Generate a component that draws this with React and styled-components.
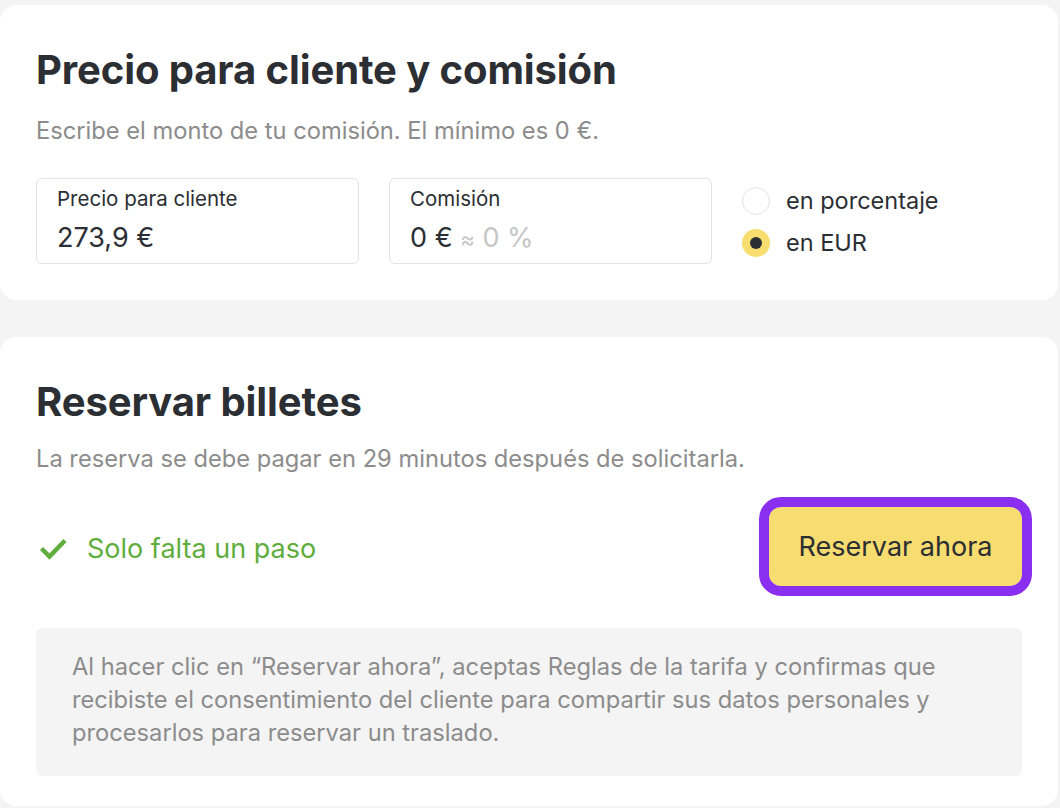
import React, { useState } from "react";
import styled, { createGlobalStyle } from "styled-components";

const GlobalStyle = createGlobalStyle`
  * { box-sizing: border-box; }
  html, body { margin: 0; padding: 0; background: #f4f4f4; }
  body {
    font-family: Inter, "Noto Sans", "Liberation Sans", sans-serif;
    color: #2b2e33;
  }
`;

const Page = styled.div`
  display: flex;
  flex-direction: column;
  gap: 37px;
  padding: 5px 2px 0 0;
  width: 1060px;
`;

const Card = styled.section`
  background: #fff;
  border-radius: 16px;
  padding: 41px 36px ${(p) => p.$bottom || 36}px;
`;

const Title = styled.h2`
  margin: 0;
  font-size: 40px;
  line-height: 48px;
  font-weight: 700;
  letter-spacing: -0.1px;
  color: #2b2e33;
`;

const Subtitle = styled.p`
  margin: ${(p) => p.$gap || 22}px 0 0;
  font-size: 23.7px;
  line-height: 30px;
  color: #8c8c8c;
`;

const FieldRow = styled.div`
  display: flex;
  align-items: flex-start;
  gap: 30px;
  margin-top: 32px;
`;

const Field = styled.div`
  width: 323px;
  height: 86px;
  border: 1px solid #e3e3e3;
  border-radius: 6px;
  padding: 8px 20px 0;
  display: flex;
  flex-direction: column;
`;

const FieldLabel = styled.span`
  font-size: 20.5px;
  line-height: 24px;
  color: #2b2e33;
`;

const FieldValue = styled.span`
  margin-top: 11px;
  font-size: 27px;
  line-height: 32px;
  color: #2b2e33;
`;

const Muted = styled.span`
  color: #c6c6c6;
`;

const Approx = styled.span`
  color: #c6c6c6;
  font-size: 22px;
`;

const RadioGroup = styled.div`
  display: flex;
  flex-direction: column;
  gap: 14px;
  padding-top: 9px;
`;

const RadioOption = styled.label`
  display: flex;
  align-items: center;
  gap: 16px;
  font-size: 23.5px;
  line-height: 28px;
  color: #2b2e33;
  cursor: pointer;
`;

const RadioDot = styled.span`
  width: 28px;
  height: 28px;
  border-radius: 50%;
  flex: none;
  display: flex;
  align-items: center;
  justify-content: center;
  background: ${(p) => (p.$checked ? "#f7dc6f" : "#fff")};
  border: ${(p) => (p.$checked ? "none" : "1px solid #e3e3e3")};

  &::after {
    content: "";
    display: ${(p) => (p.$checked ? "block" : "none")};
    width: 12px;
    height: 12px;
    border-radius: 50%;
    background: #2b2e33;
  }
`;

const ActionRow = styled.div`
  display: flex;
  align-items: center;
  justify-content: space-between;
  margin-top: 33px;
`;

const Status = styled.div`
  display: flex;
  align-items: center;
  gap: 20px;
  padding-left: 3px;
  padding-top: 4px;
  font-size: 27px;
  line-height: 32px;
  color: #5fad3c;
`;

const BookButton = styled.button`
  width: 253px;
  height: 79px;
  border: none;
  border-radius: 12px;
  background: #f7dc6f;
  font-family: inherit;
  font-size: 27px;
  color: #2b2e33;
  outline: 10px solid #8a2ef0;
  outline-offset: 0;
  cursor: pointer;
`;

const Notice = styled.div`
  margin-top: 42px;
  background: #f4f4f4;
  border-radius: 6px;
  padding: 22px 36px 27px;
  font-size: 23.7px;
  line-height: 33px;
  color: #8c8c8c;
`;

function Check() {
  return (
    <svg width="28" height="22" viewBox="0 0 28 22" fill="none">
      <path
        d="M2.5 10.5l8 8L26 2.5"
        stroke="#5fad3c"
        strokeWidth="4.5"
        strokeLinejoin="miter"
      />
    </svg>
  );
}

export default function App() {
  const [mode, setMode] = useState("eur");

  return (
    <>
      <GlobalStyle />
      <Page>
        <Card>
          <Title>Precio para cliente y comisión</Title>
          <Subtitle>Escribe el monto de tu comisión. El mínimo es 0 €.</Subtitle>
          <FieldRow>
            <Field>
              <FieldLabel>Precio para cliente</FieldLabel>
              <FieldValue>273,9 €</FieldValue>
            </Field>
            <Field>
              <FieldLabel>Comisión</FieldLabel>
              <FieldValue>
                0 € <Approx>≈</Approx> <Muted>0 %</Muted>
              </FieldValue>
            </Field>
            <RadioGroup>
              <RadioOption onClick={() => setMode("pct")}>
                <RadioDot $checked={mode === "pct"} />
                en porcentaje
              </RadioOption>
              <RadioOption onClick={() => setMode("eur")}>
                <RadioDot $checked={mode === "eur"} />
                en EUR
              </RadioOption>
            </RadioGroup>
          </FieldRow>
        </Card>

        <Card $bottom={30}>
          <Title>Reservar billetes</Title>
          <Subtitle $gap={18}>
            La reserva se debe pagar en 29 minutos después de solicitarla.
          </Subtitle>
          <ActionRow>
            <Status>
              <Check />
              Solo falta un paso
            </Status>
            <BookButton>Reservar ahora</BookButton>
          </ActionRow>
          <Notice>
            Al hacer clic en “Reservar ahora”, aceptas Reglas de la tarifa y confirmas que
            recibiste el consentimiento del cliente para compartir sus datos personales y
            procesarlos para reservar un traslado.
          </Notice>
        </Card>
      </Page>
    </>
  );
}
